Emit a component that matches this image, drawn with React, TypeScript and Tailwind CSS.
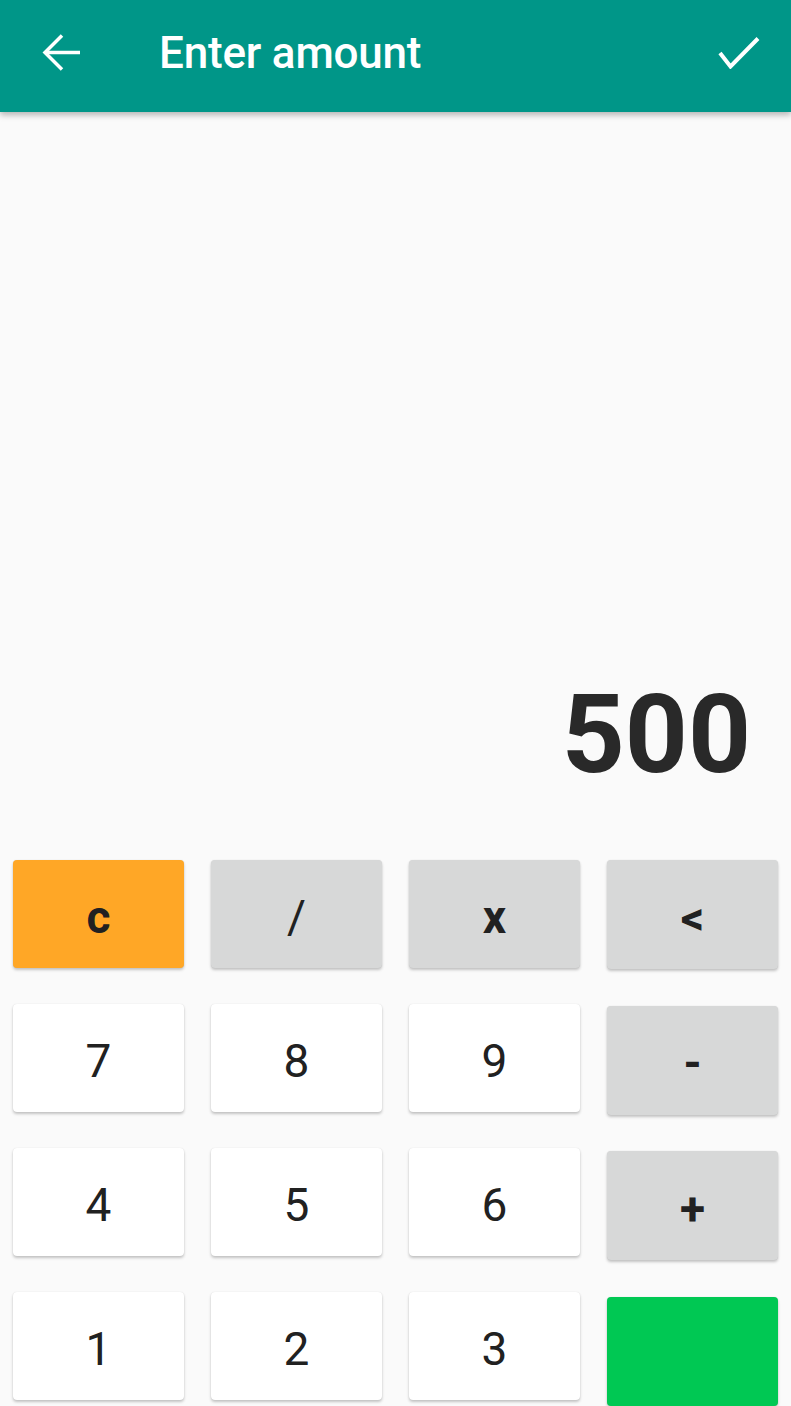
import React from "react";

type Key = { label: string; bg: string; bold?: boolean };

const cols: Key[][] = [
  [
    { label: "c", bg: "bg-[#ffa726]", bold: true },
    { label: "7", bg: "bg-white" },
    { label: "4", bg: "bg-white" },
    { label: "1", bg: "bg-white" },
  ],
  [
    { label: "/", bg: "bg-[#d7d8d8]" },
    { label: "8", bg: "bg-white" },
    { label: "5", bg: "bg-white" },
    { label: "2", bg: "bg-white" },
  ],
  [
    { label: "x", bg: "bg-[#d7d8d8]", bold: true },
    { label: "9", bg: "bg-white" },
    { label: "6", bg: "bg-white" },
    { label: "3", bg: "bg-white" },
  ],
];

const opCol: Key[] = [
  { label: "<", bg: "bg-[#d7d8d8]", bold: true },
  { label: "-", bg: "bg-[#d7d8d8]", bold: true },
  { label: "+", bg: "bg-[#d7d8d8]", bold: true },
  { label: "", bg: "bg-[#00c853]" },
];

function KeyButton({ k, tall }: { k: Key; tall?: boolean }) {
  return (
    <div
      className={`${k.bg} ${tall ? "h-[109px]" : "h-[108px]"} w-full rounded-[4px] shadow-[0_2px_3px_rgba(0,0,0,0.22),0_0_1px_rgba(0,0,0,0.12)] flex items-center justify-center pt-[6px] text-[46px] leading-none text-[#212121] ${k.bold ? "font-bold" : "font-normal"}`}
    >
      {k.label}
    </div>
  );
}

export default function App() {
  return (
    <div
      className="w-[791px] h-[1406px] bg-[#fafafa] overflow-hidden flex flex-col"
      style={{ fontFamily: "Roboto, 'Noto Sans', sans-serif" }}
    >
      <header className="h-[112px] shrink-0 bg-[#009688] flex items-center pb-[7px] shadow-[0_3px_6px_rgba(0,0,0,0.28)] relative z-10">
        <div className="w-[159px] flex items-center pl-[42px]">
          <svg width="40" height="38" viewBox="0 0 40 38" fill="none" stroke="white" strokeWidth="3.5" strokeLinecap="butt">
            <path d="M38 18.5H4" />
            <path d="M20 1.5L3 18.5L20 35.5" />
          </svg>
        </div>
        <div className="flex-1 text-white text-[44px] font-medium leading-none tracking-[-0.2px]">Enter amount</div>
        <div className="pr-[31px] flex items-center">
          <svg width="42" height="32" viewBox="0 0 42 32" fill="none" stroke="white" strokeWidth="4">
            <path d="M2 16L12.5 29.5L40 1.5" />
          </svg>
        </div>
      </header>
      <div className="h-[748px] shrink-0 flex items-end justify-end pr-[40px] pb-[70px]">
        <div className="text-[110px] leading-none font-bold text-[#292929]">500</div>
      </div>
      <div className="flex gap-[27px] px-[13px]">
        {cols.map((col, i) => (
          <div key={i} className="flex-1 flex flex-col gap-[36px]">
            {col.map((k) => (
              <KeyButton key={k.label} k={k} />
            ))}
          </div>
        ))}
        <div className="flex-1 flex flex-col gap-[36.5px]">
          {opCol.map((k, j) => (
            <KeyButton key={j} k={k} tall />
          ))}
        </div>
      </div>
    </div>
  );
}
